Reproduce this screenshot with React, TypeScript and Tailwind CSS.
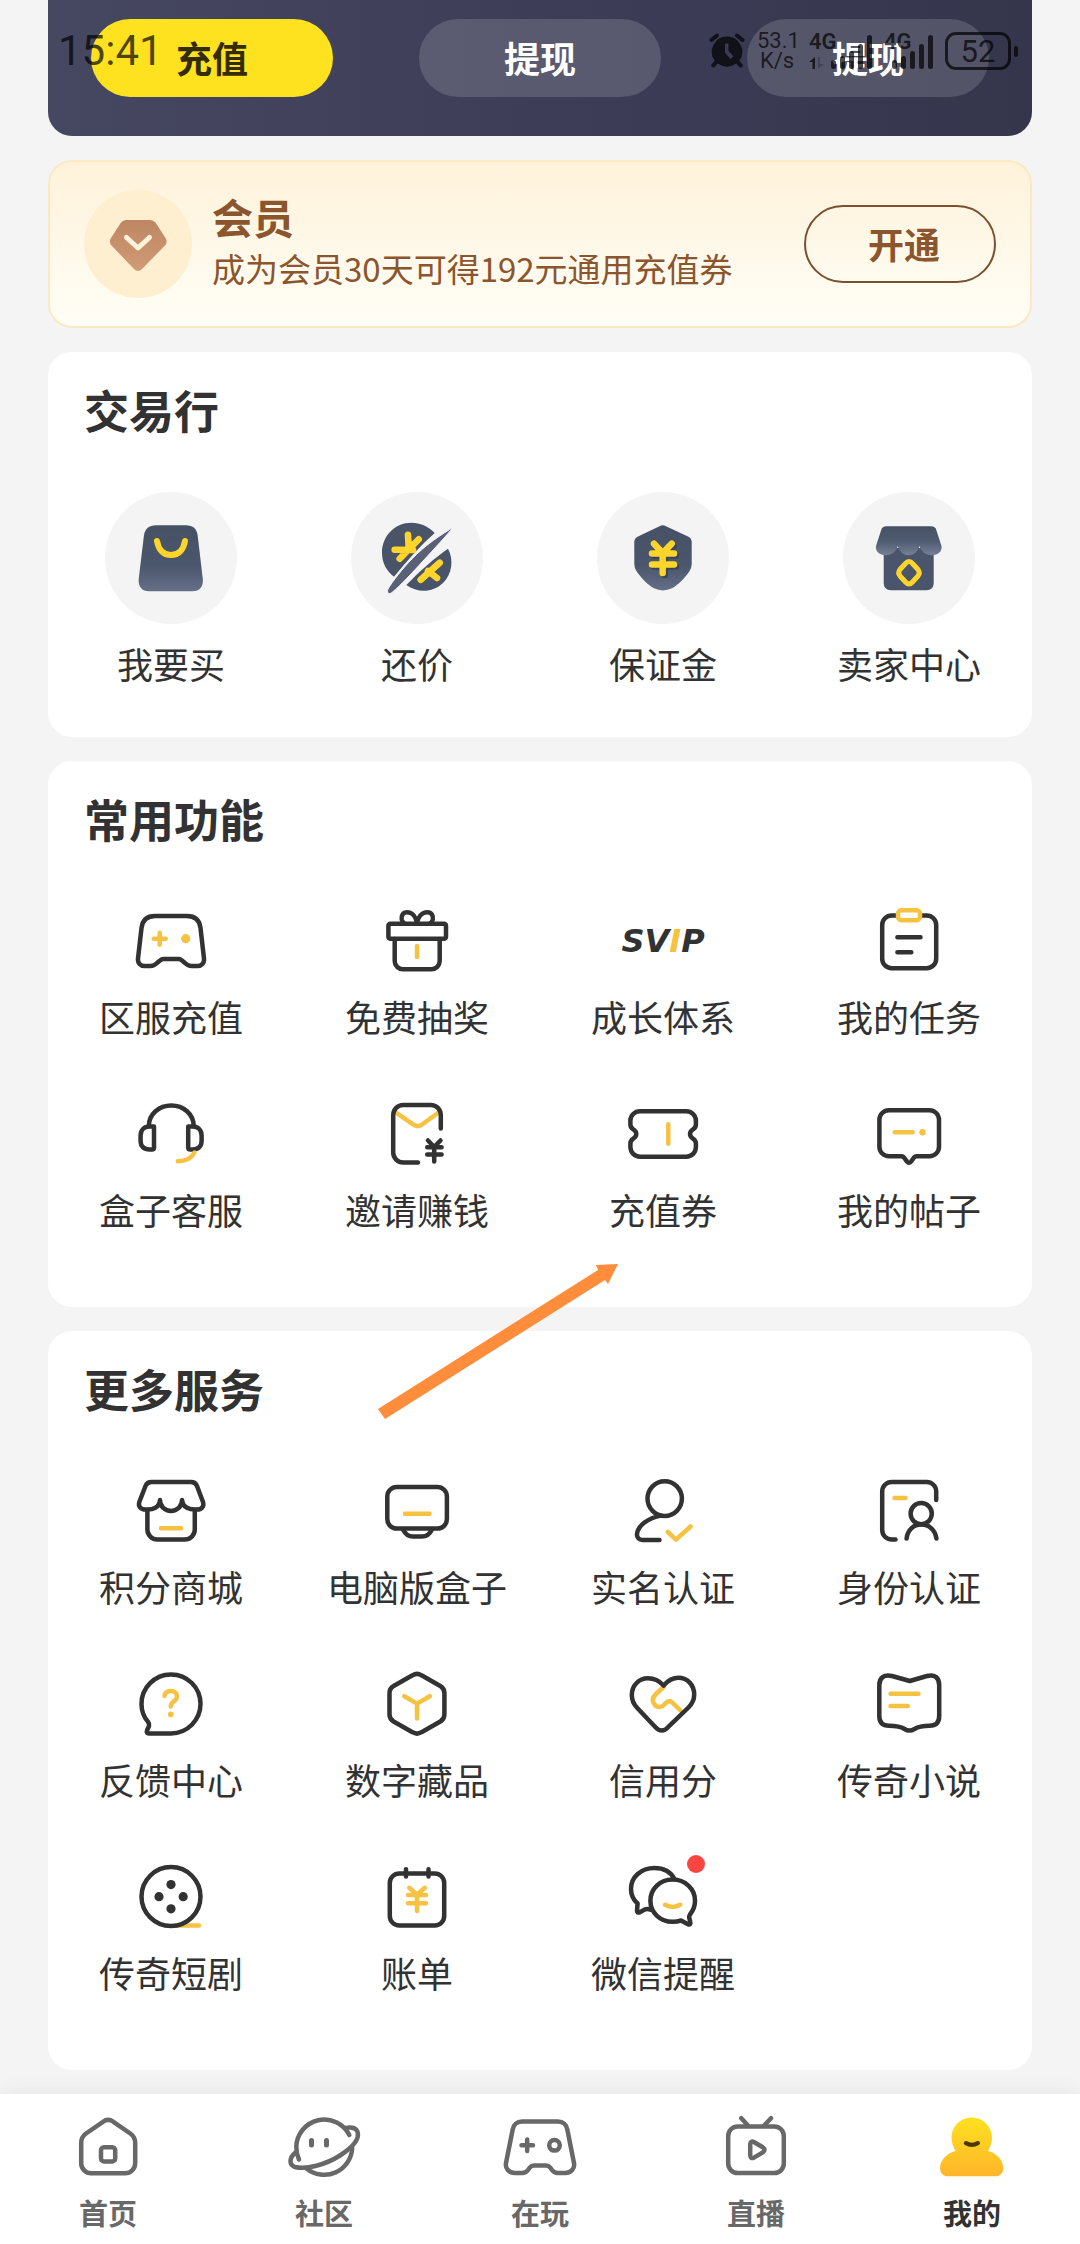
import type { ReactNode } from "react";

const DARK = "#323233";
const YELLOW = "#f5c242";
const GREY = "#686868";

/* ---------- icon frames ---------- */

function LineIcon({ children }: { children: ReactNode }) {
  return (
    <svg
      viewBox="0 0 80 80"
      className="size-20"
      fill="none"
      stroke={DARK}
      strokeWidth="4.5"
      strokeLinecap="round"
      strokeLinejoin="round"
      aria-hidden="true"
    >
      {children}
    </svg>
  );
}

function TradeIcon({ children }: { children: ReactNode }) {
  return (
    <span className="mb-1 flex size-[132px] items-center justify-center rounded-full bg-[#f4f4f5]">
      <svg viewBox="0 0 132 132" className="size-[132px]" fill="none" strokeLinecap="round" strokeLinejoin="round" aria-hidden="true">
        <defs>
          <linearGradient id="slate" gradientUnits="userSpaceOnUse" x1="66" y1="32" x2="66" y2="100">
            <stop offset="0" stopColor="#465164" />
            <stop offset="0.6" stopColor="#4a566c" />
            <stop offset="1" stopColor="#667089" />
          </linearGradient>
          <linearGradient id="awning" gradientUnits="userSpaceOnUse" x1="66" y1="34" x2="66" y2="64">
            <stop offset="0" stopColor="#465164" />
            <stop offset="0.5" stopColor="#4f5b70" />
            <stop offset="1" stopColor="#78839a" />
          </linearGradient>
        </defs>
        {children}
      </svg>
    </span>
  );
}

function NavIcon({ children }: { children: ReactNode }) {
  return (
    <svg
      viewBox="0 0 72 72"
      className="size-[72px] overflow-visible"
      fill="none"
      stroke={GREY}
      strokeWidth="4.5"
      strokeLinecap="round"
      strokeLinejoin="round"
      aria-hidden="true"
    >
      {children}
    </svg>
  );
}

/* ---------- trade icons ---------- */

const bagIcon = (
  <TradeIcon>
    <path
      d="M51 33.3H81C88 33.3 91.6 37 92.6 43L97.8 87C98.6 94.5 94.5 99.3 87.5 99.3H44C37 99.3 33 94.5 33.7 87L39 43C40 37 44 33.3 51 33.3Z"
      fill="url(#slate)"
    />
    <path d="M52 49C53.5 58 58.5 63 66 63S78.5 58 80 49" stroke="#ffd52b" strokeWidth="6" />
  </TradeIcon>
);

const bargainIcon = (
  <TradeIcon>
    <path d="M83.7 41C77 34 69 30.7 60.5 30.7C44 30.7 31 44 31 60.5C31 71 35.5 79 43 84.7C56 69 69 54 83.7 41Z" fill="#4a5468" />
    <path d="M97 56.7C103 68 101 82 92 91C82 100.5 67 101.5 55.3 93C68 80 82 67 97 56.7Z" fill="#4a5468" />
    <path
      d="M57 42.7L57.7 55M67.7 47.3L48.7 66.7M43.7 57.7L62 58M88.7 70.7L69.7 87.7M77 79L86 86"
      stroke="#ffd52b"
      strokeWidth="6.6"
    />
    <path
      d="M102.7 35C90 43 75 52 60 68C52 76 41 90 37 97C35.5 101 38 103 41 100.5C50 93 62 80 72 69C84 56 95 44 102.7 35Z"
      fill="#5a6176"
      stroke="#f4f4f8"
      strokeWidth="1"
    />
  </TradeIcon>
);

const shieldIcon = (
  <TradeIcon>
    <path
      d="M62.5 34.3Q65.7 32.4 69 34.3L91 44.5Q94.7 46.3 94.7 50V72Q94.7 76 92.3 79.5C87 87 81 93 75 96.3Q66 100.5 57 96.3C51 93 45 87 39.7 79.5Q37.3 76 37.3 72V50Q37.3 46.3 41 44.5Z"
      fill="url(#slate)"
    />
    <path d="M59 54L67.7 63M76.7 54L67.7 63V83M57 63.4H79M57 74.6H79" stroke="#3a4458" strokeWidth="6.5" />
    <path d="M57 51.7L65.7 61M74.7 51.7L65.7 61V81M55 61.4H77M55 72.6H77" stroke="#ffd52b" strokeWidth="6.5" />
  </TradeIcon>
);

const sellerIcon = (
  <TradeIcon>
    <path d="M40.7 56H90.7V91Q90.7 98.3 83.5 98.3H48Q40.7 98.3 40.7 91Z" fill="#4a556b" />
    <path
      d="M43.5 34.3H88Q92.3 34.3 93.3 38L98.5 54C99.5 59 95 63.3 89 63.3C83 63.3 78 59.5 76.5 54C75 59.5 71 63.3 65.7 63.3S56.3 59.5 54.8 54C53.3 59.5 48.5 63.3 42.5 63.3C36.5 63.3 32 59 33 54L38.2 38Q39.2 34.3 43.5 34.3Z"
      fill="url(#awning)"
    />
    <path d="M62.5 71.5Q66 67.5 69.5 71.5L75 77.5Q77.6 80.7 75 84L69.5 90Q66 94 62.5 90L57 84Q54.4 80.7 57 77.5Z" stroke="#ffd52b" strokeWidth="5" />
  </TradeIcon>
);

/* ---------- line icons ---------- */

const gamepadIcon = (
  <LineIcon>
    <path d="M24 15H56C64 15 68.5 19 69.5 27L73 57.5C73.5 62 70.5 65 66.5 65H60.5C58 65 56 64 54 62L51 59.5C50 58.5 49 58 47.5 58H32.5C31 58 30 58.5 29 59.5L26 62C24 64 22 65 19.5 65H13.5C9.5 65 6.5 62 7 57.5L10.5 27C11.5 19 16 15 24 15Z" />
    <path d="M22.7 37.7H34.7M28.7 31.7V43.7" stroke={YELLOW} />
    <circle cx="54.7" cy="37.7" r="4.6" fill={YELLOW} stroke="none" />
  </LineIcon>
);

const giftIcon = (
  <LineIcon>
    <path d="M40 22C39 16 35.5 11.3 30 11.3C26 11.3 24 15 24.7 18.5Q25.3 21 27.5 22.5M40 22C41 16 44.5 11.3 50.5 11.3C54.5 11.3 56.5 15 55.8 18.5Q55.2 21 53 22.5" />
    <rect x="11.4" y="22.8" width="57.6" height="14.9" rx="2" />
    <path d="M17.7 38V60a8.3 8.3 0 0 0 8.3 8.3H54.4a8.3 8.3 0 0 0 8.3-8.3V38" />
    <path d="M40 45V56" stroke={YELLOW} />
  </LineIcon>
);

const svipIcon = (
  <span className="flex h-20 items-center justify-center whitespace-nowrap font-['DejaVu_Sans'] text-[32px] leading-none font-bold text-[#323233] italic">
    SV<span className="text-[#f5c242]">I</span>P
  </span>
);

const taskIcon = (
  <LineIcon>
    <rect x="13.2" y="14.5" width="54" height="52.7" rx="9.5" />
    <rect x="29" y="9.3" width="22" height="10" rx="3.5" fill="#fff" stroke={YELLOW} />
    <path d="M28.4 36.3H51.5M28.4 51.3H42.3" />
  </LineIcon>
);

const headsetIcon = (
  <LineIcon>
    <path d="M17.8 32C18 20 28 11.5 40.3 11.5S62.4 20 62.8 32" />
    <path d="M23 32.6H18.5C13 32.6 9.6 36 9.6 41.5V47C9.6 52.5 13 55.4 18.5 55.4H21Q23 55.4 23 53.4Z" />
    <path d="M57.2 32.6H61.7C67.2 32.6 70.6 36 70.6 41.5V47C70.6 52.5 67.2 55.4 61.7 55.4H59.2Q57.2 55.4 57.2 53.4Z" />
    <path d="M63.5 58.5C60.5 64 55 67.3 46.8 67.3" stroke={YELLOW} />
  </LineIcon>
);

const inviteIcon = (
  <LineIcon>
    <path d="M17.5 17.5L36 30.3Q40.7 34 45.4 30.3L63 17.5" stroke={YELLOW} />
    <path d="M63.8 34.5V21a10 10 0 0 0-10-10H26.2a10 10 0 0 0-10 10V58.5a10 10 0 0 0 10 10H41" />
    <path d="M51 46.5L57.2 53L63.5 46.5M50.2 53.2H64.6M50.2 60.6H64.6M57.2 53V67.6" />
  </LineIcon>
);

const couponIcon = (
  <LineIcon>
    <path d="M17 17.2H63.3a9.6 9.6 0 0 1 9.6 9.6V30.5C72.9 33 72 34 70.3 35.2C68 36.6 67 38 67 40s1 3.4 3.3 4.8C72 46 72.9 47 72.9 49.5V53.1a9.6 9.6 0 0 1-9.6 9.6H17a9.6 9.6 0 0 1-9.6-9.6V49.5C7.4 47 8.3 46 10 44.8C12.3 43.4 13.3 42 13.3 40s-1-3.4-3.3-4.8C8.3 34 7.4 33 7.4 30.5V26.8a9.6 9.6 0 0 1 9.6-9.6Z" />
    <path d="M45.3 30.3V49.7" stroke={YELLOW} />
  </LineIcon>
);

const postIcon = (
  <LineIcon>
    <path d="M20 16.2H60.4a9.6 9.6 0 0 1 9.6 9.6V52.7a9.6 9.6 0 0 1-9.6 9.6H47.5Q46 62.3 45 63.5L42 67.6Q40 70 38 67.6L35 63.5Q34 62.3 32.5 62.3H20a9.6 9.6 0 0 1-9.6-9.6V25.8a9.6 9.6 0 0 1 9.6-9.6Z" />
    <path d="M25.7 38.3H43.5" stroke={YELLOW} />
    <circle cx="53.5" cy="38.3" r="3.2" fill={YELLOW} stroke="none" />
  </LineIcon>
);

const shopIcon = (
  <LineIcon>
    <path d="M20.5 11H60C63 11 65 12.3 66 15L72 31C73.5 35.5 70.5 38.5 66 38.5C58.5 39 51.5 36.5 51 29C51 35.5 46 40 40 40S29 35.5 29 29C28.5 36.5 22 39 14.5 38.5C10 38.5 6.8 35.5 8.3 31L14.5 15C15.5 12.3 17.5 11 20.5 11Z" />
    <path d="M16.4 39V58.5a10 10 0 0 0 10 10H53.8a10 10 0 0 0 10-10V39" />
    <path d="M30 57.2H50" stroke={YELLOW} />
  </LineIcon>
);

const computerIcon = (
  <LineIcon>
    <rect x="10.3" y="16" width="59.6" height="41.6" rx="9.5" />
    <path d="M26 58.5C28.5 63.5 31.5 65.6 36 65.6H45C49.5 65.6 52.5 63.5 55 58.5" />
    <path d="M28 42.8H52.5" stroke={YELLOW} />
  </LineIcon>
);

const realNameIcon = (
  <LineIcon>
    <ellipse cx="41.7" cy="27.6" rx="17.2" ry="17.4" />
    <path d="M38 44.6C25 47 15 54.5 14 63C13.6 66.5 16 69 19.5 69H36.5" />
    <path d="M44.8 61L53 68.6L67.6 55.5" stroke={YELLOW} />
  </LineIcon>
);

const idIcon = (
  <LineIcon>
    <path d="M67.2 29V20.5a9.5 9.5 0 0 0-9.5-9.5H22.7a9.5 9.5 0 0 0-9.5 9.5V59a9.5 9.5 0 0 0 9.5 9.5H26.5" />
    <circle cx="52.2" cy="42.6" r="10.6" />
    <path d="M37.6 67.5C38.5 59 44.5 53.5 52.3 53.5S66.3 59 67.4 67.5" />
    <path d="M25.5 27H36.5" stroke={YELLOW} />
  </LineIcon>
);

const feedbackIcon = (
  <LineIcon>
    <path d="M40 69.4A29.5 29.5 0 1 0 10.5 40C10.5 47 12.5 52.5 16.8 57.5Q18.5 59.5 18 62L16 66.5Q15 69.4 18 69.4Z" />
    <path d="M33.5 32C34 28.6 36.3 27 39.8 27C43.6 27 46 29 46 32.2C46 35.2 44.3 36.4 42.3 37.8C40.5 39.2 39.8 40.400 39.8 42.6" stroke={YELLOW} />
    <circle cx="39.8" cy="50.3" r="2.9" fill={YELLOW} stroke="none" />
  </LineIcon>
);

const hexIcon = (
  <LineIcon>
    <path d="M35.5 11.3Q40 8.4 44.5 11.3L63.3 22Q67.4 24.4 67.4 29V50.5Q67.4 55 63.3 57.5L44.5 68.2Q40 71 35.5 68.2L16.6 57.5Q12.5 55 12.5 50.5V29Q12.5 24.4 16.6 22Z" />
    <path d="M27.3 32.2L40 39.6L52.8 32.2M40 39.6V54.5" stroke={YELLOW} />
  </LineIcon>
);

const heartIcon = (
  <LineIcon>
    <path d="M41 22.5L33 30C29 33.8 29 37.5 31.5 40.5C34.2 43.8 38.5 43.8 41.2 40.8L43 38.8C45 36.7 47.3 36.6 49.4 38.6L57.5 46.5" stroke={YELLOW} />
    <path d="M40.6 21.5C36 16.5 30.5 14.3 25 14.3C15.5 14.3 8.8 21.8 8.8 31C8.8 36.5 10.8 40.5 14.5 44.3L32.5 63.2C36.5 67.5 41 67.5 45 63.2L65.5 43.5C69.3 39.8 71.2 36 71.2 30.6C71.2 21 64.5 13.8 55.5 13.8C49.8 13.8 45 16.5 40.6 21.5Z" />
  </LineIcon>
);

const novelIcon = (
  <LineIcon>
    <path d="M40.8 17L23 12C15 10 10.3 14 10.3 21V52C10.3 58.5 13.5 61.8 20 61.8C28 61.8 32 62.8 35.5 65C39 67.2 42 67.2 45.5 65C49 62.8 53 61.8 60.6 61.8C67 61.8 70.2 58.5 70.2 52V21C70.2 14 66 10 58 12Z" />
    <path d="M21.5 29.8H49.5M21.5 42H38.8" stroke={YELLOW} />
  </LineIcon>
);

const filmIcon = (
  <LineIcon>
    <path d="M46 68.6H68" stroke={YELLOW} />
    <circle cx="40" cy="39.6" r="29.5" />
    <g fill={DARK} stroke="none">
      <circle cx="40" cy="27.6" r="4.6" />
      <circle cx="28" cy="39.7" r="4.6" />
      <circle cx="52.2" cy="39.7" r="4.6" />
      <circle cx="40" cy="51.8" r="4.6" />
    </g>
  </LineIcon>
);

const billIcon = (
  <LineIcon>
    <rect x="12.8" y="16.5" width="54.4" height="52" rx="9.5" />
    <path d="M29 12.2V19.5M51.5 12.2V19.5" />
    <path d="M32.3 30.8L40 37.6L47.8 30.8M31 38H49M31 46.3H49M40 38V54" stroke={YELLOW} />
  </LineIcon>
);

const chatIcon = (
  <LineIcon>
    <path d="M51.5 22C48 15.5 41 11 31.5 11C18 11 8 20 8 32C8 37.5 10 42.5 14.6 46.5L14 53.5Q14 56.3 16.8 55.3L21.5 52.6C23.5 51.8 25.5 52 28 52.8" />
    <path d="M67 57.5C70.3 53.5 72 49 72 43.8C72 31.8 62 22.6 49.6 22.6S27.4 31.8 27.4 43.8S37.4 64.8 49.6 64.8C52.6 64.8 55.3 64.4 58 63.5L65 67.3Q68 68 67.3 65.2L66.3 61Q66 59 67 57.5Z" />
    <path d="M42 47.8Q49.5 52 57.2 47.8" stroke={YELLOW} />
  </LineIcon>
);

/* ---------- data ---------- */

type Item = { label: string; icon: ReactNode; dot?: boolean };

const tradeItems: Item[] = [
  { label: "我要买", icon: bagIcon },
  { label: "还价", icon: bargainIcon },
  { label: "保证金", icon: shieldIcon },
  { label: "卖家中心", icon: sellerIcon },
];

const commonItems: Item[] = [
  { label: "区服充值", icon: gamepadIcon },
  { label: "免费抽奖", icon: giftIcon },
  { label: "成长体系", icon: svipIcon },
  { label: "我的任务", icon: taskIcon },
  { label: "盒子客服", icon: headsetIcon },
  { label: "邀请赚钱", icon: inviteIcon },
  { label: "充值券", icon: couponIcon },
  { label: "我的帖子", icon: postIcon },
];

const moreItems: Item[] = [
  { label: "积分商城", icon: shopIcon },
  { label: "电脑版盒子", icon: computerIcon },
  { label: "实名认证", icon: realNameIcon },
  { label: "身份认证", icon: idIcon },
  { label: "反馈中心", icon: feedbackIcon },
  { label: "数字藏品", icon: hexIcon },
  { label: "信用分", icon: heartIcon },
  { label: "传奇小说", icon: novelIcon },
  { label: "传奇短剧", icon: filmIcon },
  { label: "账单", icon: billIcon },
  { label: "微信提醒", icon: chatIcon, dot: true },
];

const navItems: (Item & { active?: boolean })[] = [
  {
    label: "首页",
    icon: (
      <NavIcon>
        <path d="M31 11.8Q36.2 8 41.4 11.8L58.3 23.5Q63.2 27 63.2 33V53.3a10 10 0 0 1-10 10H19.2a10 10 0 0 1-10-10V33Q9.2 27 14 23.5Z" />
        <rect x="29" y="37.2" width="14.2" height="14.2" rx="3" />
      </NavIcon>
    ),
  },
  {
    label: "社区",
    icon: (
      <NavIcon>
        <path d="M11 49.5C9.2 45.5 8.3 41.3 8.3 36.8A28 28 0 0 1 61.3 25" />
        <path d="M64.2 38A28 28 0 0 1 18.5 58.5" />
        <path d="M57.5 18C63.5 17 68 18.3 69.4 21.5C72 28.5 65 37 52 45.5C38 54.5 18 60 7 57C1 55 .8 48 7.5 42.5" />
        <path d="M23.5 30.5V35M38.5 30.5V35" strokeWidth="5" />
      </NavIcon>
    ),
  },
  {
    label: "在玩",
    icon: (
      <NavIcon>
        <path d="M18 11.5H54C59 11.5 62.5 14.5 63.3 19.5L70 53C71 58.5 67 63 61.5 63H54C51.5 63 49.5 62 48 60L46 57.3C45 56 44 55.5 42 55.5H30C28 55.5 27 56 26 57.3L24 60C22.5 62 20.5 63 18 63H10.5C5 63 1 58.5 2 53L8.7 19.5C9.5 14.5 13 11.5 18 11.5Z" />
        <path d="M17.5 35.3H29M23.2 29.5V41" />
        <circle cx="50.5" cy="35.3" r="5.3" />
      </NavIcon>
    ),
  },
  {
    label: "直播",
    icon: (
      <NavIcon>
        <rect x="8.2" y="16.5" width="55.6" height="46.6" rx="9.5" />
        <path d="M21.3 8.2L28 15.5M51 8.2L44.2 15.5" />
        <path d="M30.2 34.8Q30.2 30.2 34.3 32.2L42.8 37.2Q46.2 39.8 42.8 42.4L34.3 47.4Q30.2 49.4 30.2 44.8Z" />
      </NavIcon>
    ),
  },
  {
    label: "我的",
    active: true,
    icon: (
      <NavIcon>
        <defs>
          <linearGradient id="mine" x1="0" y1="0" x2="0" y2="1">
            <stop offset="0" stopColor="#ffe11f" />
            <stop offset="1" stopColor="#ffb52a" />
          </linearGradient>
        </defs>
        <path
          d="M35.8 7.5C47 7.5 56 16.5 56 27.8C56 32.5 54.5 37 52 41C61 43.5 67.2 50 67.2 58.5C67.2 63 64 66.3 59.5 66.3H12C7.2 66.3 4 63 4 58.5C4 50 10.5 43.5 19.7 41C17 37 15.5 32.5 15.5 27.8C15.5 16.5 24.5 7.5 35.8 7.5Z"
          fill="url(#mine)"
          stroke="none"
        />
        <path d="M30 33.2Q35.8 36.6 41.8 33.2" stroke="#4a3a04" strokeWidth="4.4" />
      </NavIcon>
    ),
  },
];

/* ---------- pieces ---------- */

function Signal() {
  return (
    <span className="flex items-end gap-1">
      <i className="h-[9px] w-[5px] rounded-full bg-current" />
      <i className="h-[13px] w-[5px] rounded-full bg-current" />
      <i className="h-[18px] w-[5px] rounded-full bg-current" />
      <i className="h-[25px] w-[5px] rounded-full bg-current" />
      <i className="h-[34px] w-[5px] rounded-full bg-current" />
    </span>
  );
}

function StatusBar() {
  return (
    <div className="pointer-events-none absolute inset-x-0 top-0 z-10 flex h-[102px] items-center justify-between pr-[62px] pl-[58px] font-['Roboto','Noto_Sans_CJK_SC',sans-serif] text-black/70">
      <time className="text-[42px] leading-none">15:41</time>
      <div className="flex items-center gap-3">
        <svg viewBox="0 0 36 36" className="size-9" fill="none" stroke="currentColor" strokeWidth="4" strokeLinecap="round" aria-hidden="true">
          <path d="M2.5 7L8 2.5M33.5 7L28 2.5" />
          <path
            d="M18 3.5a15.2 15.2 0 0 1 12.2 24.3l3 3.3a2 2 0 0 1-3 2.7l-3-3.2a15.2 15.2 0 0 1-18.4 0l-3 3.2a2 2 0 0 1-3-2.7l3-3.3A15.2 15.2 0 0 1 18 3.5ZM16 10.5v9.2l5.5 6.3 3-2.4-5-5.6v-7.5Z"
            fill="currentColor"
            fillRule="evenodd"
            stroke="none"
          />
        </svg>
        <span className="flex w-10 flex-col text-center text-[22px] leading-5">
          <span>53.1</span>
          <span>K/s</span>
        </span>
        <span className="relative flex h-9 items-end pt-1 pl-[22px]">
          <b className="absolute top-0 left-0 text-[22px] leading-[18px] font-semibold">4G</b>
          <svg viewBox="0 0 16 12" className="absolute bottom-0 left-0 h-3 w-4" fill="currentColor" aria-hidden="true">
            <path d="M6 0V12H3.500V5H0Z" />
            <path d="M9 12V0H11V7H15Z" opacity="0.3" />
          </svg>
          <Signal />
        </span>
        <span className="relative flex h-9 items-end pt-1 pl-2">
          <b className="absolute top-0 left-0 text-[22px] leading-[18px] font-semibold">4G</b>
          <Signal />
        </span>
        <span className="flex items-center gap-[3px]">
          <span className="flex h-[38px] w-[66px] items-center justify-center rounded-[11px] border-[3px] border-current text-[31px] leading-none">52</span>
          <i className="h-[11px] w-1 rounded-full bg-current" />
        </span>
      </div>
    </div>
  );
}

function WalletPanel() {
  const pill = "h-[78px] w-[242px] rounded-full pb-0.5 text-[36px] font-bold";
  return (
    <div className="grid h-[136px] grid-cols-3 justify-items-center rounded-b-3xl bg-linear-to-r from-[#464760] via-[#3d3d58] to-[#35364c] pt-[19px]">
      <button className={`${pill} bg-[#ffe21f] text-[#332c06]`}>充值</button>
      <button className={`${pill} bg-white/15 text-white`}>提现</button>
      <button className={`${pill} bg-white/15 text-white`}>提现</button>
    </div>
  );
}

function MemberCard() {
  return (
    <section className="flex h-[168px] items-center rounded-3xl border-2 border-[#fce9c2] bg-linear-to-b from-[#fef2da] to-[#fffef6] px-[34px] text-[#8b552d]">
      <svg viewBox="0 0 108 108" className="size-[108px] shrink-0" aria-hidden="true">
        <defs>
          <linearGradient id="gem" x1="0" y1="0" x2="0" y2="1">
            <stop offset="0" stopColor="#bd8763" />
            <stop offset="1" stopColor="#d29a76" />
          </linearGradient>
        </defs>
        <circle cx="54" cy="54" r="54" fill="#feefd0" />
        <path
          d="M42 30H66Q69.5 30 71.5 32.5L81.5 48Q84 52 81 55.5L58 79Q54 83 50 79L27.5 55.5Q24.5 52 27 48L37 32.5Q39 30 42 30Z"
          fill="url(#gem)"
        />
        <path d="M42.500 47.500L54 58L65.500 47.500" fill="none" stroke="#fff3da" strokeWidth="5" strokeLinecap="round" strokeLinejoin="round" />
      </svg>
      <div className="ml-5 flex-1 pb-[7px]">
        <h2 className="text-[41px] leading-[54px] font-bold">会员</h2>
        <p className="text-[33px] leading-[50px] whitespace-nowrap">成为会员30天可得192元通用充值券</p>
      </div>
      <button className="h-[78px] w-48 shrink-0 rounded-full border-2 border-[#7a5030] pb-0.5 pl-2 text-[36px] font-bold">开通</button>
    </section>
  );
}

function Card({ title, items, className, children }: { title: string; items: Item[]; className: string; children?: ReactNode }) {
  return (
    <section className={`relative rounded-3xl bg-white pt-7 ${className}`}>
      <h2 className="px-9 text-[45px] leading-[60px] font-bold">{title}</h2>
      <ul className="mt-[52px] grid grid-cols-4 gap-y-[53px]">
        {items.map((item) => (
          <li key={item.label}>
            <button className="flex w-full flex-col items-center gap-[10px] text-[36px] leading-[50px]">
              <span className="relative">
                {item.icon}
                {item.dot && <i className="absolute -top-0.5 -right-0.5 size-[18px] rounded-full bg-[#fb4541]" />}
              </span>
              <span className="whitespace-nowrap">{item.label}</span>
            </button>
          </li>
        ))}
      </ul>
      {children}
    </section>
  );
}

export default function App() {
  return (
    <div className="relative flex min-h-screen flex-col bg-[#f4f4f4] font-['Noto_Sans_CJK_SC',sans-serif] text-[#323233]">
      <StatusBar />
      <main className="flex flex-1 flex-col gap-6 px-12 pb-6">
        <WalletPanel />
        <MemberCard />
        <Card title="交易行" items={tradeItems} className="pb-[49px]" />
        <Card title="常用功能" items={commonItems} className="pb-[73px]" />
        <Card title="更多服务" items={moreItems} className="pb-[73px]">
          <svg viewBox="0 0 240 156" className="absolute -top-[67px] left-[330px] h-[156px] w-60" fill="#ff8d3b" aria-hidden="true">
            <path d="M0 145L220 6L218 1L240 0L230 20L227 16L7 155Z" />
          </svg>
        </Card>
      </main>
      <nav className="sticky bottom-0 grid h-[150px] grid-cols-5 bg-white shadow-[0_-4px_16px_rgba(0,0,0,0.05)]">
        {navItems.map((item) => (
          <a
            key={item.label}
            href="#"
            aria-current={item.active ? "page" : undefined}
            className={`flex flex-col items-center gap-[10px] pt-4 text-[29px] leading-10 font-bold ${item.active ? "text-[#323233]" : "text-[#686868]"}`}
          >
            {item.icon}
            {item.label}
          </a>
        ))}
      </nav>
    </div>
  );
}
